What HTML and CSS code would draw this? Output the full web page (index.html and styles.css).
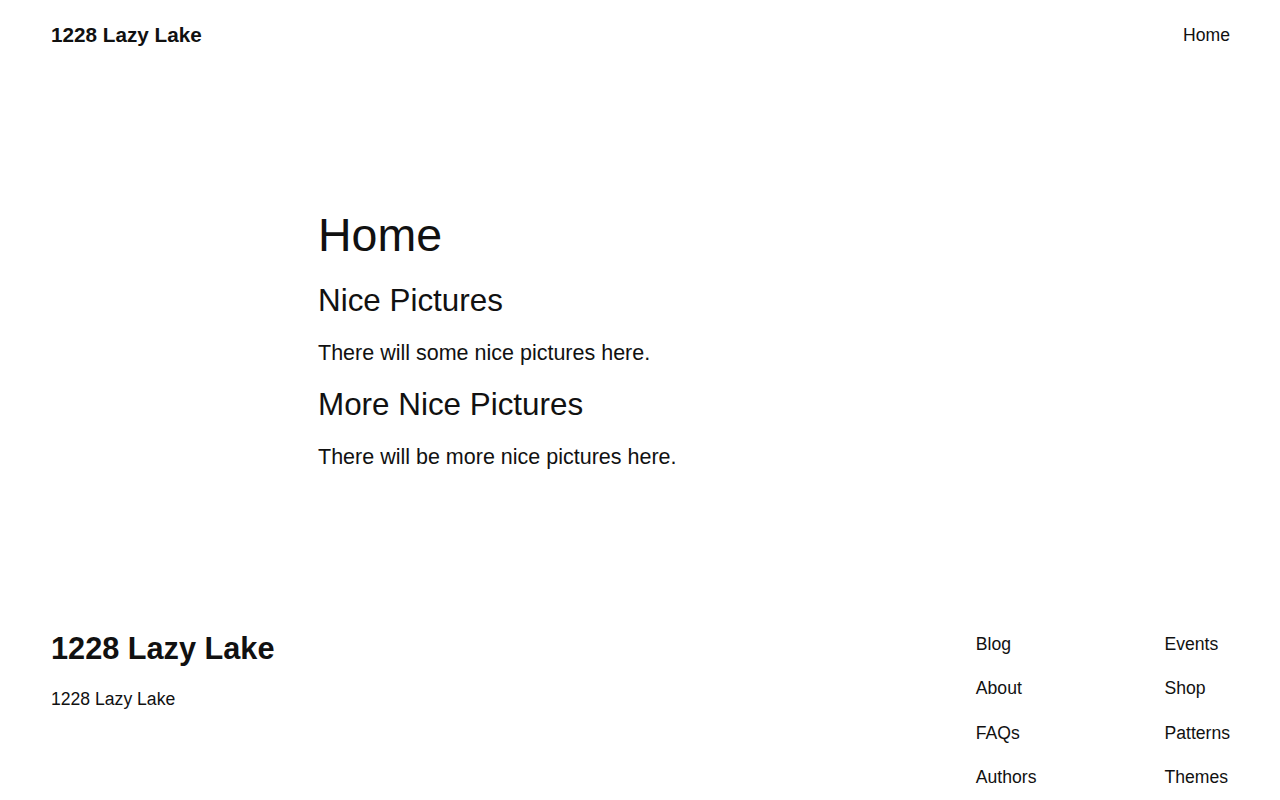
FILE: index.html
```html
<!DOCTYPE html>
<html lang="en">

<head>
    <meta charset="UTF-8">
    <meta name="viewport" content="width=device-width, initial-scale=1.0">
    <title>Home – 1228 Lazy Lake</title>
    <link rel="stylesheet" href="styles.css">
</head>

<body>
    <!-- Site Header -->
    <header class="site-header">
        <a class="site-title" href="#">1228 Lazy Lake</a>
        <nav class="site-nav">
            <a href="#">Home</a>
        </nav>
    </header>

    <!-- Page Content -->
    <main class="entry">
        <h1 class="entry-title">Home</h1>
        <h2 class="entry-heading first">Nice Pictures</h2>
        <p class="entry-text">There will some nice pictures here.</p>
        <h2 class="entry-heading">More Nice Pictures</h2>
        <p class="entry-text">There will be more nice pictures here.</p>
    </main>

    <!-- Site Footer -->
    <footer class="site-footer">
        <div class="footer-brand">
            <h2 class="footer-title">1228 Lazy Lake</h2>
            <p class="footer-tagline">1228 Lazy Lake</p>
        </div>
        <nav class="footer-links">
            <a href="#">Blog</a>
            <a href="#">Events</a>
            <a href="#">About</a>
            <a href="#">Shop</a>
            <a href="#">FAQs</a>
            <a href="#">Patterns</a>
            <a href="#">Authors</a>
            <a href="#">Themes</a>
        </nav>
    </footer>
</body>

</html>
```

FILE: styles.css
```css
/* General Styling */
body {
    font-family: 'Liberation Sans', Arial, sans-serif;
    margin: 0;
    padding: 0;
    background: #fff;
    color: #111;
    font-size: 17.6px;
    line-height: 1.5;
}

a {
    color: #111;
    text-decoration: none;
}

/* Header */
.site-header {
    display: flex;
    justify-content: space-between;
    align-items: center;
    padding: 22px 50px 0 51px;
}

.site-title {
    font-size: 20.7px;
    font-weight: bold;
    line-height: 1.2;
}

.site-nav a {
    font-size: 17.6px;
}

/* Content */
.entry {
    width: 644px;
    margin: 160px auto 0;
    display: flex;
    flex-direction: column;
}

.entry-title {
    font-size: 46.5px;
    font-weight: normal;
    line-height: 1.2;
    margin: 0;
}

.entry-heading {
    font-size: 31.4px;
    font-weight: normal;
    line-height: 1.2;
    margin: 16px 0 0;
}

.entry-heading.first {
    margin-top: 18px;
}

.entry-text {
    font-size: 21.5px;
    line-height: 1.55;
    margin: 17px 0 0;
}

/* Footer */
.site-footer {
    display: flex;
    justify-content: space-between;
    align-items: flex-start;
    padding: 157px 50px 0 51px;
}

.footer-title {
    font-size: 30.7px;
    font-weight: bold;
    line-height: 1.2;
    margin: 0;
}

.footer-tagline {
    margin: 18px 0 0;
    line-height: 1.5;
}

.footer-links {
    display: grid;
    grid-template-columns: auto auto;
    column-gap: 128px;
    row-gap: 17.9px;
}
```
